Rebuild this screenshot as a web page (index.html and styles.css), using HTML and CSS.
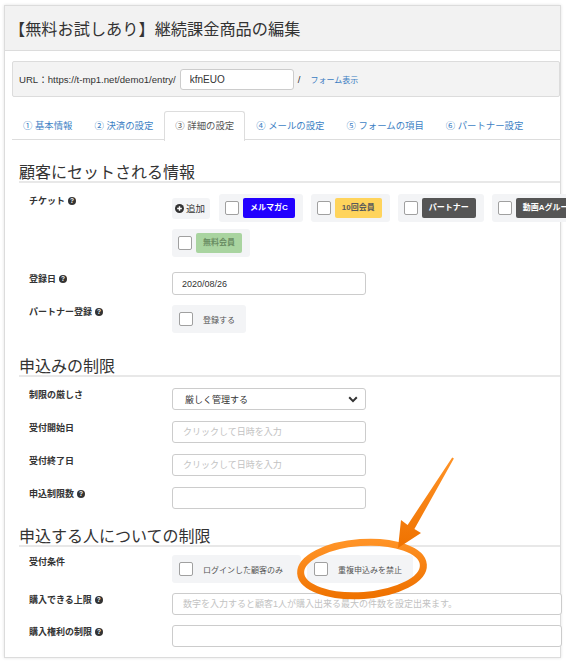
FILE: index.html
```html
<!DOCTYPE html>
<html lang="ja">
<head>
<meta charset="utf-8">
<title>継続課金商品の編集</title>
<link rel="stylesheet" href="styles.css">
</head>
<body>
<div class="page">
  <div class="panel">
    <div class="panel-head"><h1>【無料お試しあり】継続課金商品の編集</h1></div>
    <div class="panel-body">
      <div class="urlbar">
        <span class="url-text">URL：https://t-mp1.net/demo1/entry/</span>
        <input class="url-input" type="text" value="kfnEUO">
        <span class="slash">/</span>
        <a class="link">フォーム表示</a>
      </div>

      <ul class="tabs">
        <li class="tab">① 基本情報</li>
        <li class="tab">② 決済の設定</li>
        <li class="tab active">③ 詳細の設定</li>
        <li class="tab">④ メールの設定</li>
        <li class="tab">⑤ フォームの項目</li>
        <li class="tab">⑥ パートナー設定</li>
      </ul>

      <h2 class="sec-title first">顧客にセットされる情報</h2>
      <div class="row row-first">
        <div class="label">チケット<i class="help">?</i></div>
        <div class="tickets">
          <span class="add-btn"><svg class="plus" viewBox="0 0 10 10" width="9" height="9"><circle cx="5" cy="5" r="5" fill="#333"/><path d="M5 2.4v5.2M2.4 5h5.2" stroke="#fff" stroke-width="1.6"/></svg>追加</span>
          <span class="tbox"><span class="cb"></span><span class="tag tag-blue">メルマガC</span></span>
          <span class="tbox"><span class="cb"></span><span class="tag tag-yellow">10回会員</span></span>
          <span class="tbox"><span class="cb"></span><span class="tag tag-dark">パートナー</span></span>
          <span class="tbox"><span class="cb"></span><span class="tag tag-dark">動画Aグループ</span></span>
          <span class="tbox"><span class="cb"></span><span class="tag tag-green">無料会員</span></span>
        </div>
      </div>
      <div class="row row-date">
        <div class="label">登録日<i class="help">?</i></div>
        <input class="field short" type="text" value="2020/08/26">
      </div>
      <div class="row row-check">
        <div class="label">パートナー登録<i class="help">?</i></div>
        <span class="cbox"><span class="cb"></span><span class="cbox-text">登録する</span></span>
      </div>

      <h2 class="sec-title">申込みの制限</h2>
      <div class="row row-first">
        <div class="label">制限の厳しさ</div>
        <div class="field short select">厳しく管理する<svg class="chev" viewBox="0 0 10 7" width="10" height="7"><path d="M1.2 1.3 5 5.1 8.8 1.3" fill="none" stroke="#333" stroke-width="2"/></svg></div>
      </div>
      <div class="row">
        <div class="label">受付開始日</div>
        <input class="field short" type="text" placeholder="クリックして日時を入力">
      </div>
      <div class="row">
        <div class="label">受付終了日</div>
        <input class="field short" type="text" placeholder="クリックして日時を入力">
      </div>
      <div class="row">
        <div class="label">申込制限数<i class="help">?</i></div>
        <input class="field short" type="text">
      </div>

      <h2 class="sec-title third">申込する人についての制限</h2>
      <div class="row row-cond">
        <div class="label">受付条件</div>
        <div class="conds">
          <span class="cbox wide"><span class="cb"></span><span class="cbox-text">ログインした顧客のみ</span></span>
          <span class="cbox"><span class="cb"></span><span class="cbox-text">重複申込みを禁止</span></span>
        </div>
      </div>
      <div class="row row-long">
        <div class="label">購入できる上限<i class="help">?</i></div>
        <input class="field long" type="text" placeholder="数字を入力すると顧客1人が購入出来る最大の件数を設定出来ます。">
      </div>
      <div class="row row-long">
        <div class="label">購入権利の制限<i class="help">?</i></div>
        <input class="field long" type="text">
      </div>
    </div>
  </div>

  <svg class="annot" viewBox="0 0 566 663" width="566" height="663">
    <defs>
      <linearGradient id="og" x1="0" y1="0" x2="0" y2="1">
        <stop offset="0" stop-color="#ff9326"/>
        <stop offset="1" stop-color="#ef7200"/>
      </linearGradient>
    </defs>
    <ellipse cx="362" cy="569" rx="61.5" ry="26.5" transform="rotate(-4 362 569)" fill="none" stroke="url(#og)" stroke-width="7"/>
    <polygon points="452.2,457.5 407.6,524.9 401,520 398,548 421,533 414.4,529.1 453.9,458.5" fill="url(#og)"/>
  </svg>
</div>
</body>
</html>
```

FILE: styles.css
```css
* { box-sizing: border-box; }

body {
  margin: 0;
  background: #fff;
  color: #333;
  font-family: "Liberation Sans", "Noto Sans CJK JP", sans-serif;
}

.page {
  position: relative;
  width: 566px;
  height: 663px;
  padding: 5px 0 0 4px;
  overflow: hidden;
}

.panel {
  width: 557px;
  border: 1px solid #dcdcdc;
  box-shadow: 0 0 3px rgba(0, 0, 0, 0.12);
  background: #fff;
  padding-bottom: 10px;
}

.panel-head {
  height: 45px;
  background: #f2f2f2;
  border-bottom: 1px solid #dcdcdc;
  display: flex;
  align-items: center;
  padding-left: 4px;
}

h1 {
  margin: 0;
  font-size: 16.2px;
  font-weight: normal;
  color: #333;
  font-family: "Noto Sans CJK JP", sans-serif;
}

.panel-body {
  padding: 10px 0 0 7px;
}

.urlbar {
  height: 36px;
  border: 1px solid #dcdcdc;
  border-radius: 2px;
  background: #f3f3f3;
  display: flex;
  align-items: center;
  padding-left: 6px;
  font-size: 9.6px;
  color: #333;
}

.url-input {
  margin-left: 4px;
  width: 114px;
  height: 21px;
  border: 1px solid #ccc;
  border-radius: 3px;
  background: #fff;
  padding: 0 0 0 9px;
  font-family: "Liberation Sans", sans-serif;
  font-size: 10px;
  color: #333;
}

.slash { margin-left: 4px; }

.link {
  margin-left: 10px;
  color: #3a7cc2;
  font-size: 8px;
}

.tabs {
  list-style: none;
  margin: 14px 0 0;
  padding: 0;
  display: flex;
  border-bottom: 1px solid #ddd;
  height: 29px;
}

.tab {
  height: 29px;
  line-height: 27px;
  padding: 0 10px;
  border: 1px solid transparent;
  border-bottom: none;
  font-size: 9.4px;
  color: #3d7fc4;
  white-space: nowrap;
}

.tab.active {
  border-color: #ddd;
  border-radius: 3px 3px 0 0;
  background: #fff;
  color: #555;
  height: 30px;
}

.sec-title {
  margin: 22px 0 0 7px;
  font-size: 16px;
  line-height: 20px;
  font-weight: normal;
  color: #333;
  border-bottom: 2px solid #e8e8e8;
  font-family: "Noto Sans CJK JP", sans-serif;
}

.sec-title.first { margin-top: 21px; }
.sec-title.third { margin-top: 16px; }

.row {
  display: flex;
  align-items: flex-start;
  margin: 11px 0 0 17px;
}

.row-date { margin-top: 11px; }
.row-check { margin-top: 10px; }
.row-cond { margin-top: 8px; }
.row-long { margin-top: 10px; }

.label {
  width: 143px;
  flex: none;
  font-size: 9px;
  font-weight: bold;
  line-height: 14px;
  color: #333;
  display: flex;
  align-items: center;
}

.help {
  display: inline-block;
  width: 8px;
  height: 8px;
  margin-left: 3px;
  border-radius: 50%;
  background: #333;
  color: #fff;
  font-style: normal;
  font-size: 6.5px;
  line-height: 8px;
  text-align: center;
  font-weight: bold;
}

.tickets {
  width: 420px;
  flex: none;
  display: flex;
  flex-wrap: wrap;
  align-items: center;
  gap: 7px 8px;
  padding-bottom: 4px;
}

.add-btn {
  height: 21px;
  width: 38px;
  margin-right: 1px;
  border-radius: 3px;
  background: #f3f4f6;
  display: flex;
  align-items: center;
  padding-left: 3px;
  gap: 2px;
  font-size: 9.5px;
  color: #333;
}

.plus { flex: none; }

.tbox {
  height: 28px;
  border-radius: 3px;
  background: #f3f4f6;
  display: flex;
  align-items: center;
  gap: 4px;
  padding: 0 8px 0 6px;
}

.cb {
  width: 14px;
  height: 14px;
  flex: none;
  border: 1px solid #a0a0a0;
  border-radius: 2px;
  background: #fff;
}

.tag {
  height: 20px;
  line-height: 20px;
  padding: 0 7px;
  border-radius: 2px;
  font-size: 8px;
  font-weight: bold;
  white-space: nowrap;
}

.tag-blue { background: #2200ff; color: #fff; }
.tag-yellow { background: #ffd45c; color: #5a5a5a; }
.tag-dark { background: #555; color: #fff; }
.tag-green { background: #a9d4a0; color: #6b8e64; }

.field {
  height: 22px;
  border: 1px solid #ccc;
  border-radius: 3px;
  background: #fff;
  padding: 0 0 0 10px;
  font-family: "Liberation Sans", "Noto Sans CJK JP", sans-serif;
  font-size: 9px;
  color: #333;
  flex: none;
}

.field::placeholder { color: #c2c2c2; }

.short { width: 194px; }
.row-date .field { height: 23px; padding-left: 9px; }
.long { width: 390px; }

.select {
  display: flex;
  align-items: center;
  justify-content: space-between;
  padding: 0 7px 0 12px;
}

.chev { flex: none; }

.cbox {
  height: 28px;
  border-radius: 3px;
  background: #f3f4f6;
  display: flex;
  align-items: center;
  gap: 10px;
  padding: 0 11px 0 7px;
  font-size: 8px;
  color: #555;
}

.cbox-text { white-space: nowrap; }

.conds {
  display: flex;
  gap: 6px;
}

.cbox.wide { padding-right: 18px; }

.annot {
  position: absolute;
  left: 0;
  top: 0;
  pointer-events: none;
}
```
